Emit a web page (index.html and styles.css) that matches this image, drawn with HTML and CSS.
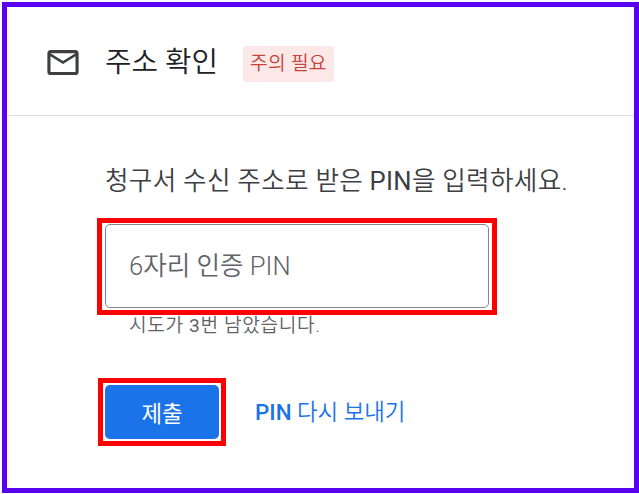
FILE: index.html
```html
<!DOCTYPE html>
<html lang="ko">
  <head>
    <meta charset="UTF-8" />
    <meta name="viewport" content="width=device-width, initial-scale=1.0" />
    <title>주소 확인</title>
    <link rel="stylesheet" href="styles.css">
  </head>
  <body>
    <div class="frame">
      <div class="header">
        <svg class="mail-icon" viewBox="2 4 20 16" aria-hidden="true">
          <path d="M20 4H4c-1.1 0-2 .9-2 2v12c0 1.1.9 2 2 2h16c1.1 0 2-.9 2-2V6c0-1.1-.9-2-2-2zm0 14H4V8l8 5 8-5v10zm-8-7L4 6h16l-8 5z" />
        </svg>
        <h2 class="title">주소 확인</h2>
        <span class="badge">주의 필요</span>
      </div>
      <div class="content">
        <p class="intro">청구서 수신 주소로 받은 <span class="regular">PIN</span>을 입력하세요.</p>
        <div class="mark input-mark">
          <input class="pin-input" type="text" placeholder="6자리 인증 PIN" />
        </div>
        <p class="hint">시도가 <span class="regular">3</span>번 남았습니다.</p>
        <div class="actions">
          <div class="mark btn-mark">
            <button class="btn">제출</button>
          </div>
          <a class="resend" href="#"><span class="latin">PIN</span> 다시 보내기</a>
        </div>
      </div>
    </div>
  </body>
</html>
```

FILE: styles.css
```css
* {
  margin: 0;
  padding: 0;
  box-sizing: border-box;
  font-family: Roboto, "Noto Sans CJK KR", sans-serif;
}
body {
  background-color: #ffffff;
  width: 639px;
  height: 494px;
  padding: 2px 0 0 2px;
  overflow: hidden;
}
.frame {
  width: 637px;
  height: 491px;
  border: 5px solid #5a00f0;
  background: #ffffff;
  overflow: hidden;
}
.header {
  display: flex;
  align-items: center;
  height: 109px;
  padding: 0 0 0 40px;
  border-bottom: 1px solid #e0e0e0;
}
.mail-icon {
  width: 32px;
  height: 25px;
  fill: #3c4043;
  margin-top: 2px;
}
.title {
  margin-left: 26px;
  margin-bottom: 3px;
  font-size: 28.8px;
  font-weight: 350;
  color: #202124;
}
.badge {
  margin-left: 25px;
  margin-top: 6px;
  padding: 4px 7px;
  border-radius: 3px;
  background: #fce8e6;
  color: #c9403c;
  font-size: 19.2px;
  font-weight: 350;
  letter-spacing: 0.3px;
  line-height: 28px;
}
.content {
  padding: 50px 0 0 98px;
}
.intro {
  font-size: 25.6px;
  font-weight: 350;
  letter-spacing: 0.3px;
  line-height: 30px;
  color: #3c4043;
}
.regular {
  font-weight: 400;
}
.mark {
  position: relative;
}
.mark::after {
  content: "";
  position: absolute;
  border: 5px solid #ff0000;
  pointer-events: none;
}
.input-mark {
  width: 384px;
  margin-top: 28px;
}
.input-mark::after {
  inset: -6px -8px -7px -8px;
}
.pin-input {
  display: block;
  width: 384px;
  height: 84px;
  padding: 0 23px;
  border: 1px solid #80868b;
  border-radius: 5px;
  font-size: 25.6px;
  font-weight: 350;
  color: #202124;
}
.pin-input::placeholder {
  color: #5f6368;
  opacity: 1;
}
.hint {
  margin-top: 6px;
  padding-left: 24px;
  font-size: 19.2px;
  font-weight: 350;
  letter-spacing: 0.6px;
  line-height: 24px;
  color: #5f6368;
}
.actions {
  display: flex;
  align-items: center;
  gap: 36px;
  margin-top: 47px;
}
.btn-mark::after {
  inset: -7px;
}
.btn {
  display: block;
  width: 114px;
  height: 54px;
  border: none;
  border-radius: 5px;
  background: #1a73e8;
  color: #ffffff;
  font-size: 22.4px;
  cursor: pointer;
}
.resend {
  margin-bottom: 4px;
  color: #1a73e8;
  font-size: 22.4px;
  font-weight: 350;
  text-decoration: none;
}
.latin {
  font-weight: 500;
}
```
